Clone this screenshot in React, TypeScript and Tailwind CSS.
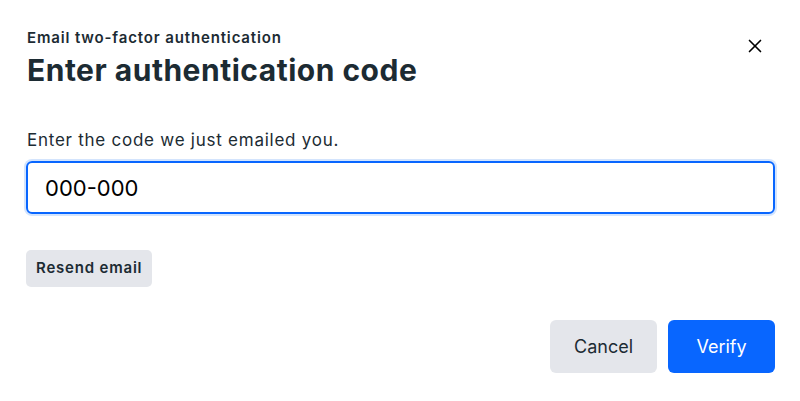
import { X } from "lucide-react";

export default function App() {
  return (
    <div
      className="w-[800px] h-[401px] bg-white text-[#1c2b33] relative"
      style={{ fontFamily: "Inter, 'Liberation Sans', sans-serif" }}
    >
      <div className="px-[27px] pt-[29px]">
        {/* Header */}
        <p className="text-[15px] font-semibold leading-[18px] tracking-[0.85px] text-[#1c2b33]">
          Email two-factor authentication
        </p>
        <h1 className="text-[30px] font-bold leading-[36px] mt-[5px] tracking-[0.5px] text-[#1c2b33]">
          Enter authentication code
        </h1>

        {/* Body */}
        <p className="mt-[41px] text-[17px] leading-[22px] tracking-[0.75px] text-[#1c2b33]">
          Enter the code we just emailed you.
        </p>
        <input
          type="text"
          defaultValue="000-000"
          className="mt-[10px] -ml-[1px] block w-[749px] h-[53px] px-[17px] text-[22px] text-black border-2 border-[#0866ff] rounded-[6px] outline-none shadow-[0_0_0_2px_#d3e4fd]"
        />

        <button className="mt-[36px] -ml-[1px] h-[37px] px-[10px] rounded-[5px] bg-[#e4e6eb] text-[15px] font-semibold tracking-[0.8px] text-[#1c2b33]">
          Resend email
        </button>

        {/* Footer */}
        <div className="mt-[33px] flex justify-end gap-[11px] w-[748px]">
          <button className="w-[107px] h-[53px] rounded-[6px] bg-[#e4e6eb] text-[18px] text-[#1c2b33]">Cancel</button>
          <button className="w-[107px] h-[53px] rounded-[6px] bg-[#0866ff] text-[18px] text-white">Verify</button>
        </div>
      </div>

      <button className="absolute top-[34px] left-[743px] w-[24px] h-[24px] flex items-center justify-center text-black">
        <X className="w-[22px] h-[22px]" strokeWidth={1.8} />
      </button>
    </div>
  );
}
